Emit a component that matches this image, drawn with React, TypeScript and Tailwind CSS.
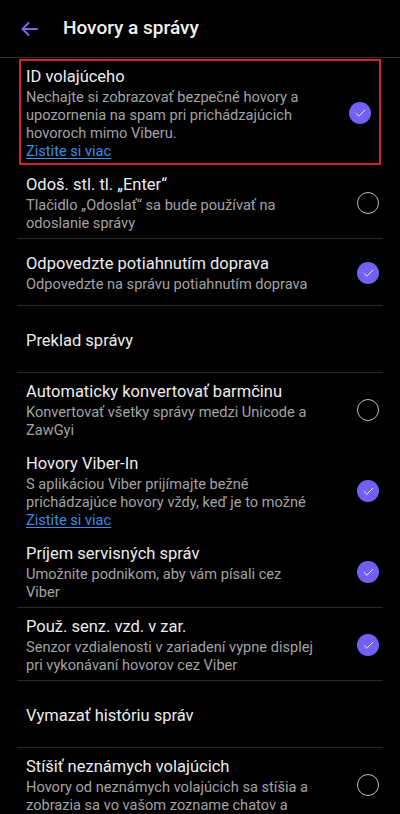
import { Check } from "lucide-react";

type Row = {
  title: string;
  subtitle?: string;
  link?: boolean;
  checked?: boolean;
  divider?: boolean;
  highlight?: boolean;
};

const rows: Row[] = [
  {
    title: "ID volajúceho",
    subtitle: "Nechajte si zobrazovať bezpečné hovory a upozornenia na spam pri prichádzajúcich hovoroch mimo Viberu.",
    link: true,
    checked: true,
    highlight: true,
  },
  {
    title: "Odoš. stl. tl. „Enter“",
    subtitle: "Tlačidlo „Odoslať“ sa bude používať na odoslanie správy",
    checked: false,
    divider: true,
  },
  {
    title: "Odpovedzte potiahnutím doprava",
    subtitle: "Odpovedzte na správu potiahnutím doprava",
    checked: true,
    divider: true,
  },
  { title: "Preklad správy", divider: true },
  {
    title: "Automaticky konvertovať barmčinu",
    subtitle: "Konvertovať všetky správy medzi Unicode a ZawGyi",
    checked: false,
  },
  {
    title: "Hovory Viber-In",
    subtitle: "S aplikáciou Viber prijímajte bežné prichádzajúce hovory vždy, keď je to možné",
    link: true,
    checked: true,
  },
  {
    title: "Príjem servisných správ",
    subtitle: "Umožnite podnikom, aby vám písali cez Viber",
    checked: true,
    divider: true,
  },
  {
    title: "Použ. senz. vzd. v zar.",
    subtitle: "Senzor vzdialenosti v zariadení vypne displej pri vykonávaní hovorov cez Viber",
    checked: true,
    divider: true,
  },
  { title: "Vymazať históriu správ", divider: true },
  {
    title: "Stíšiť neznámych volajúcich",
    subtitle: "Hovory od neznámych volajúcich sa stíšia a zobrazia sa vo vašom zozname chatov a",
    checked: false,
  },
];

export default function App() {
  return (
    <div className="h-[814px] w-[400px] overflow-hidden bg-black font-['Roboto','Liberation_Sans',sans-serif]">
      <header className="flex h-[58px] items-center border-b border-[#2e2e2e]">
        <div className="flex w-[63px] justify-center pr-[4px]">
          <svg width="17" height="14" viewBox="0 0 17 14" fill="none">
            <path d="M16 7H1.5M7.5 1L1.5 7l6 6" stroke="#7b67ee" strokeWidth="2" strokeLinecap="round" strokeLinejoin="round" />
          </svg>
        </div>
        <h1 className="text-[19px] font-medium text-[#f2f2f2]">Hovory a správy</h1>
      </header>

      <div>
        {rows.map((row) => (
          <SettingRow key={row.title} row={row} />
        ))}
      </div>
    </div>
  );
}

function SettingRow({ row }: { row: Row }) {
  const hasToggle = row.checked !== undefined;
  const body = (
    <div className="flex w-[292px] flex-col">
      <span className="text-[16.5px] leading-[21px] text-[#ececec]">{row.title}</span>
      {row.subtitle && (
        <span className="mt-px text-[14.6px] leading-[18px] text-[#a3a3a3]">{row.subtitle}</span>
      )}
      {row.link && (
        <span className="text-[14.6px] leading-[18px] text-[#3d8de3] underline underline-offset-2">Zistite si viac</span>
      )}
    </div>
  );

  const toggle = hasToggle ? <Toggle checked={!!row.checked} /> : null;

  if (row.highlight) {
    return (
      <div className="pt-px pb-px">
        <div className="mx-[19px] flex items-center justify-between border-2 border-[#d2222f] pt-[5px] pb-[3px] pl-[5px] pr-[8px]">
          {body}
          {toggle}
        </div>
      </div>
    );
  }

  return (
    <div
      className="mx-[17px] flex min-h-[67px] items-center justify-between pt-2 pb-[6px] pl-[9px] pr-[4px]"
      style={row.divider ? { borderBottom: "1px solid #2a2a2a" } : undefined}
    >
      {body}
      {toggle}
    </div>
  );
}

function Toggle({ checked }: { checked: boolean }) {
  if (checked) {
    return (
      <div className="flex h-[22px] w-[22px] shrink-0 items-center justify-center rounded-full bg-[#7360f2]">
        <Check size={13} strokeWidth={1.6} color="#ffffff" />
      </div>
    );
  }
  return <div className="h-[22px] w-[22px] shrink-0 rounded-full border-[1.5px] border-[#bdbdbd]" />;
}
